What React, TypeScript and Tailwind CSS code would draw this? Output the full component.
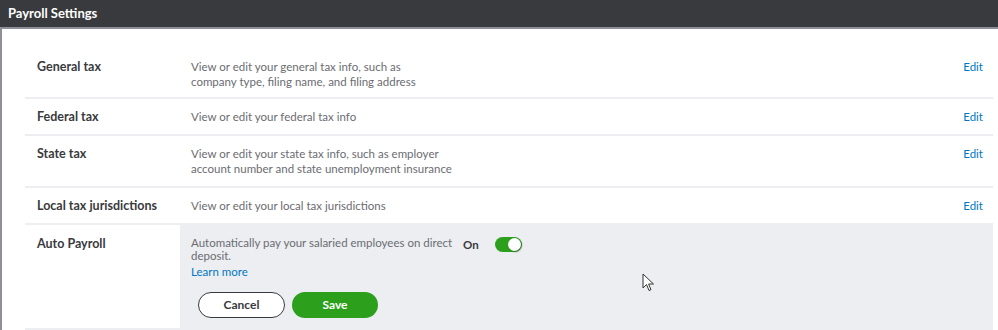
import React from 'react';

type Row = { label: string; desc: string[] };

const rows: Row[] = [
  { label: 'General tax', desc: ['View or edit your general tax info, such as', 'company type, filing name, and filing address'] },
  { label: 'Federal tax', desc: ['View or edit your federal tax info'] },
  { label: 'State tax', desc: ['View or edit your state tax info, such as employer', 'account number and state unemployment insurance'] },
  { label: 'Local tax jurisdictions', desc: ['View or edit your local tax jurisdictions'] },
];

const SettingRow: React.FC<{ row: Row; first?: boolean }> = ({ row, first }) => (
  <div className={`flex border-b-2 border-[#eceef1] ${first ? 'pt-[30px] pb-[8px]' : 'pt-[10px] pb-[10px]'}`}>
    <div className="w-[155px] pl-3 text-[12.5px] leading-[15px] font-bold text-[#393a3d]">{row.label}</div>
    <div className="flex-1 pl-[11px] text-[11.5px] leading-[15px] text-[#6b6c72]">
      {row.desc.map((d) => (
        <div key={d}>{d}</div>
      ))}
    </div>
    <a className="pr-[10px] text-[11.5px] leading-[15px] text-[#0077c5]">Edit</a>
  </div>
);

export default function App() {
  return (
    <div className="w-[998px] h-[330px] overflow-hidden bg-white font-['Lato',sans-serif] relative">
      {/* Header */}
      <div className="h-[29px] bg-[#393a3d] border-b-2 border-[#8d9096] flex items-center px-2">
        <span className="text-white font-bold text-[13px]">Payroll Settings</span>
      </div>

      <div className="border-l-2 border-[#8d9096] pl-[23px] pr-[5px] h-full">
        {rows.map((r, i) => (
          <SettingRow key={r.label} row={r} first={i === 0} />
        ))}

        {/* Auto Payroll */}
        <div className="flex border-b-2 border-[#eceef1]">
          <div className="w-[155px] pl-3 pt-[11px] text-[12.5px] leading-[15px] font-bold text-[#393a3d]">Auto Payroll</div>
          <div className="flex-1 bg-[#eceef1] pl-[11px] pt-[11px] pb-[10px]">
            <div className="flex">
              <div className="w-[262px] text-[11.5px] leading-[13px] text-[#6b6c72]">
                Automatically pay your salaried employees on direct deposit.
              </div>
              <div className="ml-[10px] mt-[1px] flex items-center gap-[16px] h-[15px]">
                <span className="text-[11.5px] font-bold text-[#393a3d]">On</span>
                <div className="w-[27px] h-[15px] rounded-full bg-[#2ca01c] flex items-center justify-end pr-[1px]">
                  <div className="w-[13px] h-[13px] rounded-full bg-white shadow-[1px_1px_2px_rgba(0,0,0,0.35)]" />
                </div>
              </div>
            </div>
            <a className="block mt-[3px] text-[11.5px] leading-[14px] text-[#0077c5]">Learn more</a>
            <div className="flex gap-[7px] mt-[13px] ml-[7px]">
              <button className="w-[87px] h-[26px] rounded-full border-[1.5px] border-[#393a3d] bg-white text-[12px] font-bold text-[#393a3d]">
                Cancel
              </button>
              <button className="w-[86px] h-[26px] rounded-full bg-[#2ca01c] text-[12px] font-bold text-white">
                Save
              </button>
            </div>
          </div>
        </div>
      </div>

      {/* mouse cursor */}
      <svg className="absolute left-[642px] top-[273px]" width="13" height="19" viewBox="0 0 13 19">
        <path d="M1 1 L1 15 L4.5 11.5 L7 17.5 L9 16.7 L6.6 11 L11.5 11 Z" fill="white" stroke="#333" strokeWidth="1" strokeLinejoin="round" />
      </svg>
    </div>
  );
}
